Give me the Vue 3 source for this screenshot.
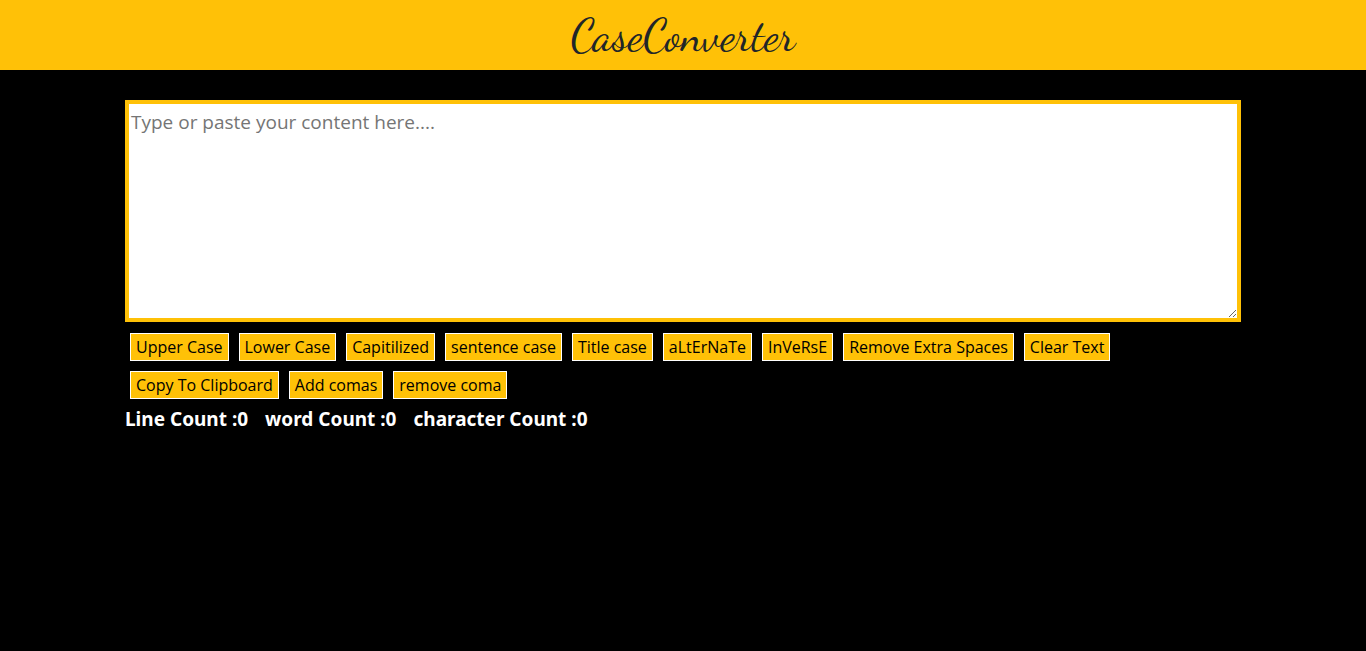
<script setup>
import { ref, computed } from 'vue'

const text = ref('')

const titleCase = (s) => s.toLowerCase().replace(/(^|\s)\S/g, (c) => c.toUpperCase())
const flip = (c) => (c === c.toUpperCase() ? c.toLowerCase() : c.toUpperCase())

const actions = [
  { label: 'Upper Case', run: (s) => s.toUpperCase() },
  { label: 'Lower Case', run: (s) => s.toLowerCase() },
  { label: 'Capitilized', run: titleCase },
  { label: 'sentence case', run: (s) => s.toLowerCase().replace(/(^\s*|[.!?]\s+)\S/g, (c) => c.toUpperCase()) },
  { label: 'Title case', run: titleCase },
  { label: 'aLtErNaTe', run: (s) => [...s].map((c, i) => (i % 2 ? c.toUpperCase() : c.toLowerCase())).join('') },
  { label: 'InVeRsE', run: (s) => [...s].map(flip).join('') },
  { label: 'Remove Extra Spaces', run: (s) => s.replace(/ +/g, ' ').trim() },
  { label: 'Clear Text', run: () => '' },
  { label: 'Copy To Clipboard', run: (s) => { navigator.clipboard?.writeText(s); return s } },
  { label: 'Add comas', run: (s) => s.trim().split(/\s+/).join(', ') },
  { label: 'remove coma', run: (s) => s.replace(/,/g, '') },
]

const lines = computed(() => (text.value ? text.value.split('\n').length : 0))
const words = computed(() => text.value.split(/\s+/).filter(Boolean).length)
</script>

<template>
  <header class="banner">
    <h1 class="brand">CaseConverter</h1>
  </header>
  <main class="container">
    <textarea v-model="text" class="editor" aria-label="Content" placeholder="Type or paste your content here...."></textarea>
    <div class="actions">
      <button v-for="a in actions" :key="a.label" type="button" class="action" @click="text = a.run(text)">{{ a.label }}</button>
    </div>
    <div class="counts">
      <span>Line Count :{{ lines }}</span>
      <span>word Count :{{ words }}</span>
      <span>character Count :{{ text.length }}</span>
    </div>
  </main>
</template>

<style>
body {
  background: #000;
}
</style>

<style scoped>
.banner {
  display: flex;
  justify-content: center;
  padding: 8px 0 6px;
  background: #ffc107;
}
.brand {
  margin: 0;
  font-family: "Dancing Script", cursive;
  font-size: 45px;
  font-weight: 400;
  line-height: 56px;
  color: #212529;
}
.container {
  box-sizing: border-box;
  max-width: 1140px;
  margin: 30px auto 0;
  padding: 0 12px;
  font-family: "Segoe UI", "Noto Sans", sans-serif;
}
.editor {
  display: block;
  box-sizing: border-box;
  width: 100%;
  height: 222px;
  margin: 0;
  padding: 2px;
  border: 4px solid #ffc107;
  border-radius: 0;
  outline: none;
  background: #fff;
  color: #212529;
  font-family: "Segoe UI", "Open Sans", sans-serif;
  font-size: 19px;
  line-height: 32px;
  resize: vertical;
}
.editor::placeholder {
  color: #757575;
}
.actions {
  display: flex;
  flex-wrap: wrap;
  gap: 10px;
  padding: 11px 5px 4px;
}
.action {
  margin: 0;
  padding: 1px 5px;
  border: 1px solid #fff;
  border-radius: 0;
  background: #ffc107;
  color: #000;
  font-family: "Segoe UI", "Open Sans", sans-serif;
  font-size: 16px;
  font-weight: 400;
  line-height: 24px;
}
.counts {
  display: flex;
  gap: 17px;
  color: #fff;
  font-size: 19px;
  font-weight: 700;
  line-height: 32px;
}
</style>
